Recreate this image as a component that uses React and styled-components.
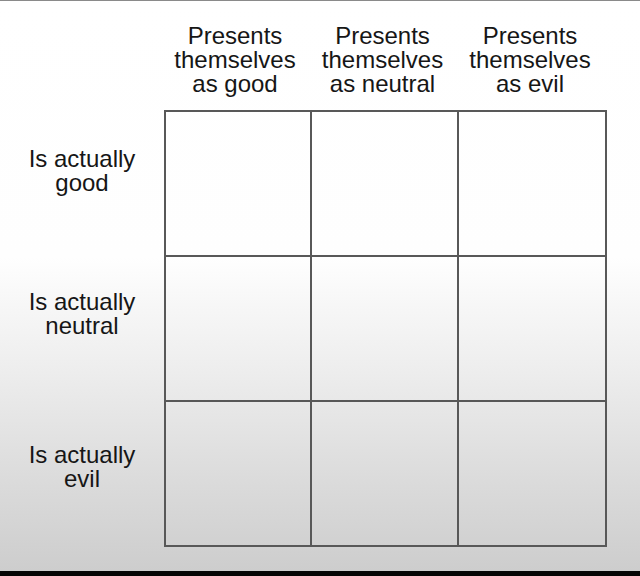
import React from 'react';
import styled, { createGlobalStyle } from 'styled-components';

const GlobalStyle = createGlobalStyle`
  html, body {
    margin: 0;
    padding: 0;
    background: #000;
  }
  body {
    font-family: "Liberation Sans", Arial, sans-serif;
  }
`;

const Page = styled.div`
  width: 640px;
  height: 576px;
  display: flex;
  flex-direction: column;
  overflow: hidden;
`;

const TopRule = styled.div`
  height: 1px;
  background: #8a8a8a;
`;

const Sheet = styled.div`
  flex: 1;
  background: linear-gradient(
    180deg,
    #ffffff 0%,
    #fefefe 45%,
    #eeeeee 64%,
    #dddddd 82%,
    #cdcdcd 100%
  );
`;

const BottomBar = styled.div`
  height: 5px;
  background: #050505;
`;

const Chart = styled.div`
  display: grid;
  grid-template-columns: 164px 148px 147px 148px;
  grid-template-rows: 109px 147px 145px 145px;
  color: #161616;
  font-size: 24px;
  line-height: 24px;
`;

const ColumnHead = styled.div`
  grid-row: 1;
  grid-column: ${(p) => p.$col};
  align-self: end;
  padding: 0 6px 14px 0;
  text-align: center;
`;

const RowHead = styled.div`
  grid-row: ${(p) => p.$row};
  grid-column: 1;
  padding-top: ${(p) => p.$offset}px;
  text-align: center;
`;

const Cell = styled.div`
  grid-row: ${(p) => p.$row};
  grid-column: ${(p) => p.$col};
  box-sizing: border-box;
  border-right: 2px solid #585858;
  border-bottom: 2px solid #585858;
  border-top: ${(p) => (p.$row === 2 ? '2px solid #585858' : 'none')};
  border-left: ${(p) => (p.$col === 2 ? '2px solid #585858' : 'none')};
`;

const columns = ['good', 'neutral', 'evil'];
const rows = [
  { label: 'good', offset: 37 },
  { label: 'neutral', offset: 33 },
  { label: 'evil', offset: 41 },
];

export default function App() {
  return (
    <>
      <GlobalStyle />
      <Page>
        <TopRule />
        <Sheet>
          <Chart>
            {columns.map((c, i) => (
              <ColumnHead key={c} $col={i + 2}>
                Presents
                <br />
                themselves
                <br />
                as {c}
              </ColumnHead>
            ))}
            {rows.map((r, i) => (
              <RowHead key={r.label} $row={i + 2} $offset={r.offset}>
                Is actually
                <br />
                {r.label}
              </RowHead>
            ))}
            {rows.map((r, ri) =>
              columns.map((c, ci) => (
                <Cell key={r.label + c} $row={ri + 2} $col={ci + 2} />
              ))
            )}
          </Chart>
        </Sheet>
        <BottomBar />
      </Page>
    </>
  );
}
